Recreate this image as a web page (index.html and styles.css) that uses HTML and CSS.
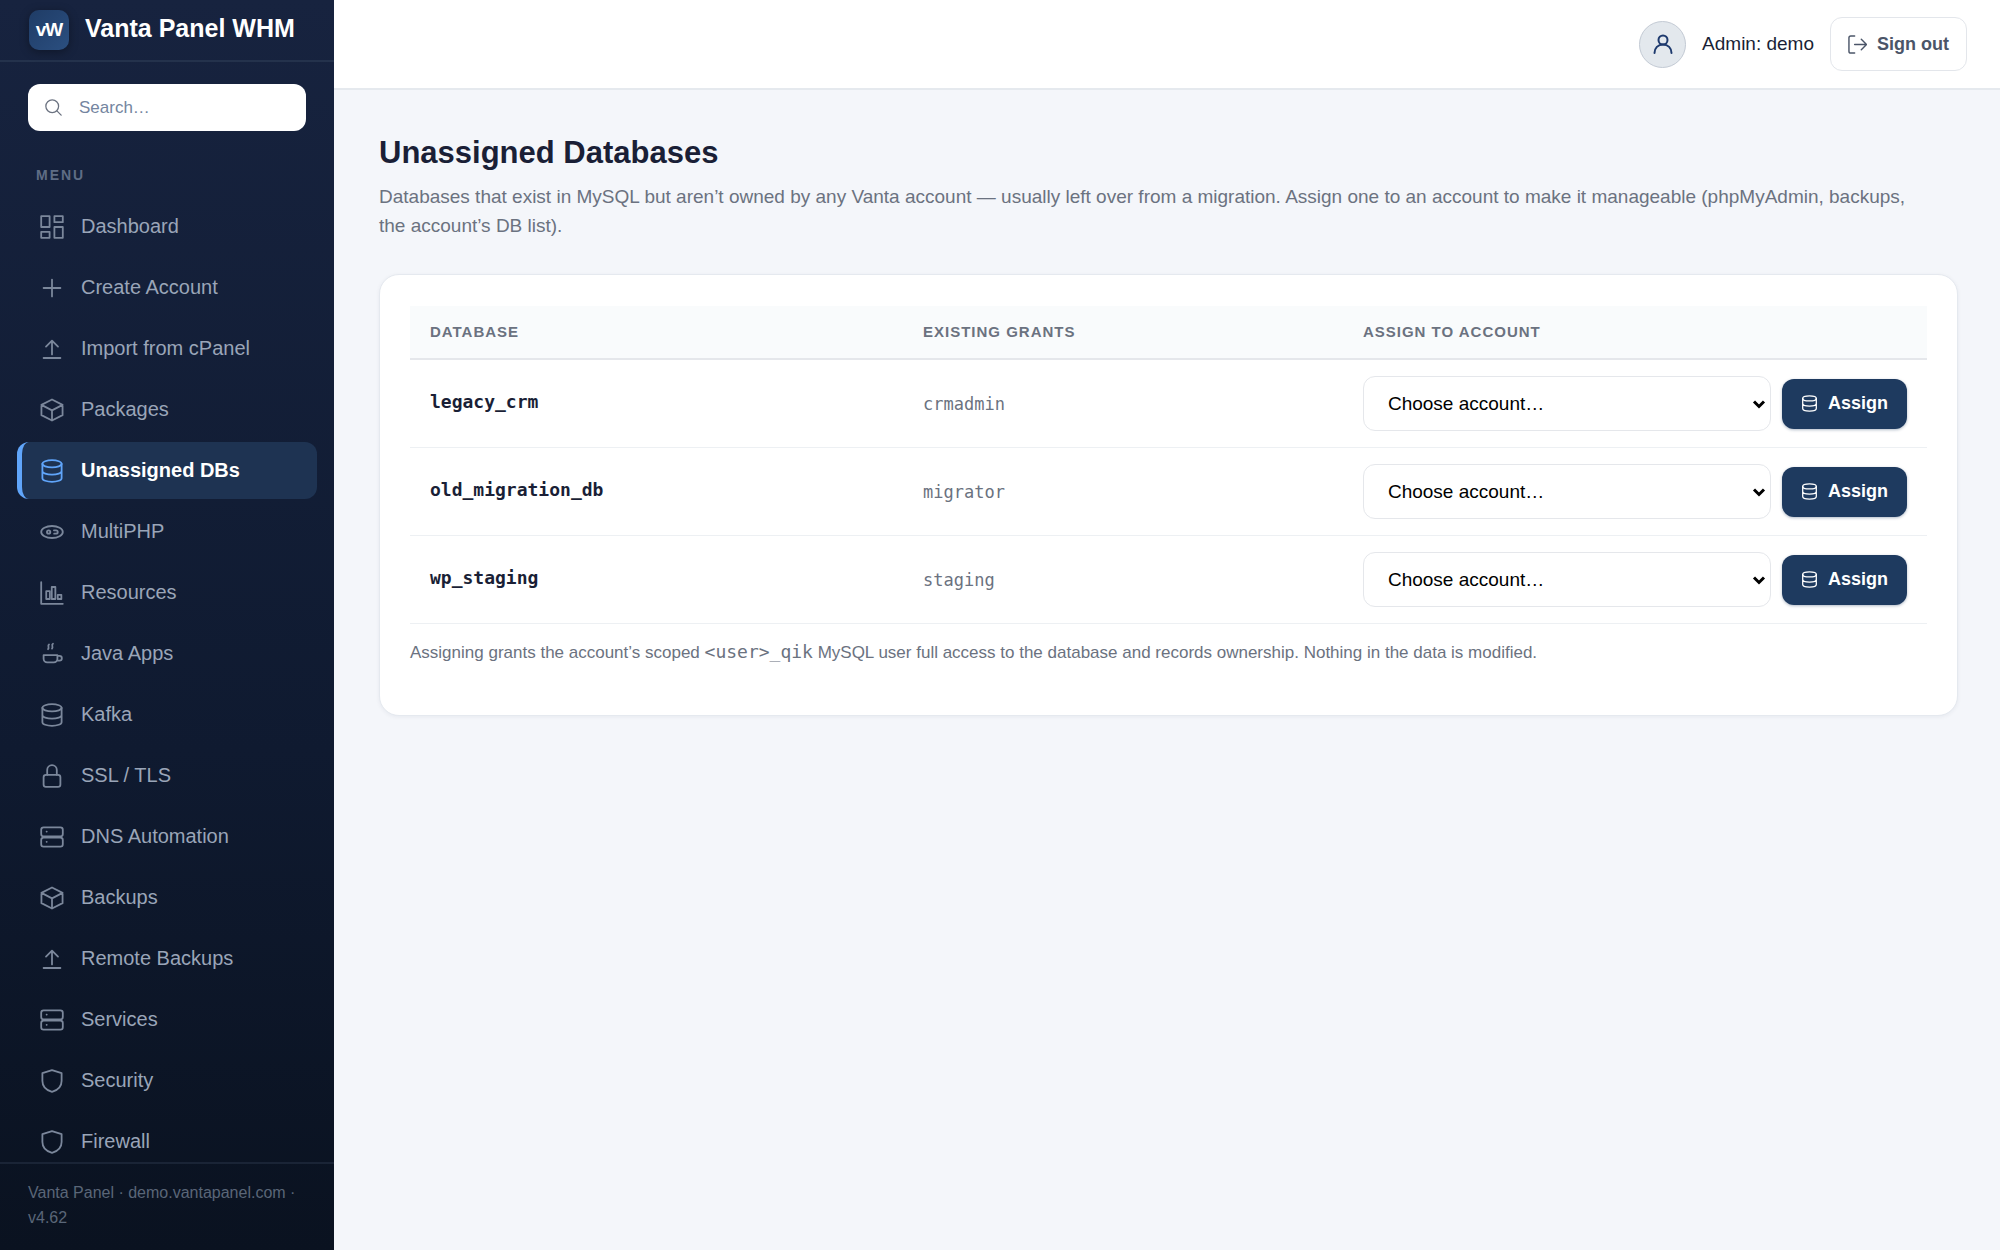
FILE: index.html
```html
<!DOCTYPE html>
<html lang="en">
<head>
    <meta charset="UTF-8">
    <meta name="viewport" content="width=device-width, initial-scale=1.0">
    <title>Unassigned Databases - Vanta Panel WHM</title>
    <link rel="stylesheet" href="styles.css">
</head>
<body>
    <!-- Shared icons -->
    <svg class="sprite" aria-hidden="true">
        <symbol id="i-dashboard" viewBox="2 2 20 20"><rect x="3" y="3" width="7" height="9"/><rect x="14" y="3" width="7" height="5"/><rect x="14" y="12" width="7" height="9"/><rect x="3" y="16" width="7" height="5"/></symbol>
        <symbol id="i-plus" viewBox="2 2 20 20"><path d="M12 5v14M5 12h14"/></symbol>
        <symbol id="i-upload" viewBox="2 2 20 20"><path d="M12 16.5V5M7 10l5-5 5 5M5 19.5h14"/></symbol>
        <symbol id="i-box" viewBox="2 2 20 20"><path d="M12 3.2l8.8 4.5v8.6L12 20.8l-8.8-4.5V7.700zM3.2 7.7l8.8 4.6 8.8-4.6M12 12.3v8.5"/></symbol>
        <symbol id="i-db" viewBox="2 2 20 20"><ellipse cx="12" cy="6" rx="8" ry="3"/><path d="M4 6v12c0 1.7 3.6 3 8 3s8-1.3 8-3V6M4 12c0 1.7 3.6 3 8 3s8-1.3 8-3"/></symbol>
        <symbol id="i-php" viewBox="2 2 20 20"><ellipse cx="12" cy="12" rx="9" ry="5"/><circle cx="9.2" cy="12" r="1.4"/><path d="M13.600 10.600h1.800a1.400 1.400 0 0 1 0 2.800h-1.600"/></symbol>
        <symbol id="i-chart" viewBox="2 2 20 20"><path d="M3 3v18h18"/><rect x="7.2" y="10.500" width="3" height="6.500"/><rect x="11.8" y="7" width="3" height="10"/><rect x="16.800" y="13.500" width="3" height="3.500"/></symbol>
        <symbol id="i-java" viewBox="2 2 20 20"><path d="M5 13h11.500v3a3 3 0 0 1-3 3H8a3 3 0 0 1-3-3zM16.500 13.500h1.700a2 2 0 0 1 0 4h-2M9.500 4c-1.600 1 .6 2.500-.8 4M12.800 3.500c-1.800 1 .6 2.500-.8 4"/></symbol>
        <symbol id="i-lock" viewBox="2 2 20 20"><rect x="5" y="11" width="14" height="10" rx="2"/><path d="M8 11V7a4 4 0 0 1 8 0v4"/></symbol>
        <symbol id="i-server" viewBox="2 2 20 20"><rect x="3" y="4" width="18" height="7.500" rx="2"/><rect x="3" y="12.500" width="18" height="7.500" rx="2"/><path d="M7.500 7.500h.1M7.500 16h.1"/></symbol>
        <symbol id="i-shield" viewBox="2 2 20 20"><path d="M12 3l8 2.500V12c0 5-3.500 7.800-8 9-4.500-1.200-8-4-8-9V5.500z"/></symbol>
        <symbol id="i-search" viewBox="2 2 20 20"><circle cx="10.500" cy="10.500" r="7.500"/><path d="M16 16l5 5"/></symbol>
        <symbol id="i-user" viewBox="2 2 20 20"><circle cx="12" cy="8" r="4.500"/><path d="M3.500 21c0-5 3.500-8.500 8.500-8.500s8.500 3.500 8.500 8.500"/></symbol>
        <symbol id="i-logout" viewBox="2 2 20 20"><path d="M9 3H5a2 2 0 0 0-2 2v14a2 2 0 0 0 2 2h4M9 12h12M16 6.500l5.500 5.500-5.500 5.500"/></symbol>
        <symbol id="i-chevron" viewBox="0 0 14 10"><path d="M2 2.500l5 5 5-5"/></symbol>
    </svg>

    <div class="layout">
        <aside class="sidebar">
            <div class="brand">
                <span class="brand-logo">vW</span>
                <span class="brand-name">Vanta Panel WHM</span>
            </div>

            <div class="search">
                <svg class="search-icon"><use href="#i-search"/></svg>
                <input type="search" placeholder="Search…" aria-label="Search">
            </div>

            <div class="menu-title">Menu</div>
            <nav class="menu">
                <a href="#"><svg><use href="#i-dashboard"/></svg>Dashboard</a>
                <a href="#"><svg><use href="#i-plus"/></svg>Create Account</a>
                <a href="#"><svg><use href="#i-upload"/></svg>Import from cPanel</a>
                <a href="#"><svg><use href="#i-box"/></svg>Packages</a>
                <a href="#" class="active"><svg><use href="#i-db"/></svg>Unassigned DBs</a>
                <a href="#"><svg><use href="#i-php"/></svg>MultiPHP</a>
                <a href="#"><svg><use href="#i-chart"/></svg>Resources</a>
                <a href="#"><svg><use href="#i-java"/></svg>Java Apps</a>
                <a href="#"><svg><use href="#i-db"/></svg>Kafka</a>
                <a href="#"><svg><use href="#i-lock"/></svg>SSL / TLS</a>
                <a href="#"><svg><use href="#i-server"/></svg>DNS Automation</a>
                <a href="#"><svg><use href="#i-box"/></svg>Backups</a>
                <a href="#"><svg><use href="#i-upload"/></svg>Remote Backups</a>
                <a href="#"><svg><use href="#i-server"/></svg>Services</a>
                <a href="#"><svg><use href="#i-shield"/></svg>Security</a>
                <a href="#"><svg><use href="#i-shield"/></svg>Firewall</a>
            </nav>

            <div class="sidebar-footer">Vanta Panel · demo.vantapanel.com · v4.62</div>
        </aside>

        <div class="page">
            <header class="topbar">
                <span class="avatar"><svg><use href="#i-user"/></svg></span>
                <span class="admin">Admin: demo</span>
                <button type="button" class="btn-signout"><svg><use href="#i-logout"/></svg>Sign out</button>
            </header>

            <main class="content">
                <h1>Unassigned Databases</h1>
                <p class="lead">Databases that exist in MySQL but aren’t owned by any Vanta account — usually left over from a migration. Assign one to an account to make it manageable (phpMyAdmin, backups, the account’s DB list).</p>

                <section class="card">
                    <table>
                        <thead>
                            <tr>
                                <th class="col-db">Database</th>
                                <th class="col-grants">Existing grants</th>
                                <th>Assign to account</th>
                            </tr>
                        </thead>
                        <tbody>
                            <tr>
                                <td class="db-name">legacy_crm</td>
                                <td class="grants">crmadmin</td>
                                <td>
                                    <form class="assign">
                                        <div class="select">
                                            <select aria-label="Account for legacy_crm"><option>Choose account…</option></select>
                                            <svg><use href="#i-chevron"/></svg>
                                        </div>
                                        <button type="button" class="btn-assign"><svg><use href="#i-db"/></svg>Assign</button>
                                    </form>
                                </td>
                            </tr>
                            <tr>
                                <td class="db-name">old_migration_db</td>
                                <td class="grants">migrator</td>
                                <td>
                                    <form class="assign">
                                        <div class="select">
                                            <select aria-label="Account for old_migration_db"><option>Choose account…</option></select>
                                            <svg><use href="#i-chevron"/></svg>
                                        </div>
                                        <button type="button" class="btn-assign"><svg><use href="#i-db"/></svg>Assign</button>
                                    </form>
                                </td>
                            </tr>
                            <tr>
                                <td class="db-name">wp_staging</td>
                                <td class="grants">staging</td>
                                <td>
                                    <form class="assign">
                                        <div class="select">
                                            <select aria-label="Account for wp_staging"><option>Choose account…</option></select>
                                            <svg><use href="#i-chevron"/></svg>
                                        </div>
                                        <button type="button" class="btn-assign"><svg><use href="#i-db"/></svg>Assign</button>
                                    </form>
                                </td>
                            </tr>
                        </tbody>
                    </table>
                    <p class="note">Assigning grants the account’s scoped <code>&lt;user&gt;_qik</code> MySQL user full access to the database and records ownership. Nothing in the data is modified.</p>
                </section>
            </main>
        </div>
    </div>
</body>
</html>
```
FILE: styles.css
```css
* {
    box-sizing: border-box;
}

body {
    margin: 0;
    font-family: "Liberation Sans", Arial, sans-serif;
    font-size: 19px;
    color: #1a1f36;
    background: #f4f6fa;
}

.sprite {
    display: none;
}

svg {
    flex: none;
    fill: none;
    stroke: currentColor;
    stroke-width: 1.5;
    stroke-linecap: round;
    stroke-linejoin: round;
}

.layout {
    display: flex;
    height: 100vh;
}

/* Sidebar */
.sidebar {
    display: flex;
    flex-direction: column;
    flex: none;
    width: 334px;
    background: linear-gradient(180deg, #17233f 0%, #0f1a30 60%, #0a1220 100%);
}

.brand {
    display: flex;
    align-items: flex-start;
    gap: 16px;
    padding: 10px 29px;
    border-bottom: 2px solid #24324c;
}

.brand-logo {
    display: flex;
    align-items: center;
    justify-content: center;
    width: 40px;
    height: 40px;
    border-radius: 10px;
    background: linear-gradient(135deg, #1f3c66, #2b4f80);
    box-shadow: 0 2px 10px rgba(0, 0, 0, 0.35);
    color: #fff;
    font-size: 19px;
    font-weight: bold;
    letter-spacing: -1px;
}

.brand-name {
    color: #fff;
    font-size: 25px;
    line-height: 36px;
    font-weight: bold;
}

.search {
    display: flex;
    align-items: center;
    gap: 17px;
    height: 47px;
    margin: 22px 28px 0;
    padding: 0 17px;
    border-radius: 12px;
    background: #fff;
}

.search-icon {
    width: 17px;
    height: 17px;
    color: #6b7280;
}

.search input {
    width: 100%;
    padding: 0;
    border: 0;
    outline: 0;
    background: none;
    font: inherit;
    font-size: 17px;
}

.search input::placeholder {
    color: #7485a0;
}

.menu-title {
    margin: 34px 36px 13px;
    color: #5f6d85;
    font-size: 14px;
    line-height: 20px;
    font-weight: bold;
    letter-spacing: 2px;
    text-transform: uppercase;
}

.menu {
    display: flex;
    flex-direction: column;
    flex: 1;
    gap: 4px;
    min-height: 0;
    padding: 0 17px;
    overflow: hidden;
}

.menu a {
    display: flex;
    flex: none;
    align-items: center;
    gap: 17px;
    padding: 14px 18px;
    border-left: 5px solid transparent;
    border-radius: 12px;
    color: #9aa5b8;
    font-size: 20px;
    line-height: 29px;
    text-decoration: none;
}

.menu svg {
    width: 24px;
    height: 24px;
    color: #7b879b;
}

.menu a.active {
    border-left-color: #60a5fa;
    background: #1e3352;
    color: #fff;
    font-weight: bold;
}

.menu a.active svg {
    color: #60a5fa;
}

.sidebar-footer {
    padding: 16px 28px 20px;
    border-top: 2px solid #1a2436;
    color: #5a6678;
    font-size: 16px;
    line-height: 25px;
}

/* Top bar */
.page {
    flex: 1;
    min-width: 0;
    overflow: auto;
}

.topbar {
    display: flex;
    align-items: center;
    justify-content: flex-end;
    gap: 16px;
    height: 90px;
    padding: 0 33px;
    border-bottom: 2px solid #e5e9ee;
    background: #fff;
}

.avatar {
    display: flex;
    align-items: center;
    justify-content: center;
    width: 47px;
    height: 47px;
    border: 1px solid #c3cad4;
    border-radius: 50%;
    background: #e3e8ed;
    color: #1e3a6e;
}

.avatar svg {
    width: 20px;
    height: 20px;
    stroke-width: 2;
}

.btn-signout {
    display: flex;
    align-items: center;
    gap: 10px;
    height: 54px;
    padding: 0 17px;
    border: 1px solid #e3e6eb;
    border-radius: 12px;
    background: #fff;
    color: #4b5568;
    font: inherit;
    font-size: 18px;
    font-weight: bold;
}

.btn-signout svg {
    width: 19px;
    height: 19px;
}

/* Content */
.content {
    padding: 44px 42px 44px 45px;
}

h1 {
    margin: 0 0 10px;
    font-size: 31px;
    line-height: 38px;
}

.lead {
    max-width: 1550px;
    margin: 0 0 34px;
    color: #6b7280;
    line-height: 29px;
}

.card {
    padding: 31px 30px 48px;
    border: 1px solid #e5e9ef;
    border-radius: 20px;
    background: #fff;
    box-shadow: 0 1px 4px rgba(20, 30, 60, 0.06);
}

table {
    width: 100%;
    border-collapse: collapse;
    table-layout: fixed;
}

th {
    padding: 16px 20px;
    border-bottom: 2px solid #e5e7eb;
    background: #f9fbfc;
    color: #6b7280;
    font-size: 15px;
    line-height: 20px;
    letter-spacing: 1px;
    text-align: left;
    text-transform: uppercase;
}

.col-db {
    width: 32.5%;
}

.col-grants {
    width: 29%;
}

td {
    padding: 16px 20px;
    border-bottom: 1px solid #edf0f3;
}

.db-name {
    padding-bottom: 20px;
    font-family: "DejaVu Sans Mono", monospace;
    font-size: 18px;
    font-weight: bold;
}

.grants {
    color: #6b7280;
    font-family: "DejaVu Sans Mono", monospace;
    font-size: 17px;
}

.assign {
    display: flex;
    align-items: center;
    gap: 11px;
    margin: 0;
}

.select {
    position: relative;
    flex: 1;
    min-width: 0;
}

.select select {
    display: block;
    width: 100%;
    height: 55px;
    padding: 0 24px;
    border: 1px solid #e5e7eb;
    border-radius: 12px;
    background: #fff;
    color: #000;
    font: inherit;
    appearance: none;
}

/* Arrow lies over the select */
.select svg {
    position: absolute;
    top: 23px;
    right: 5px;
    width: 14px;
    height: 10px;
    stroke-width: 3;
    stroke-linecap: butt;
    stroke-linejoin: miter;
    color: #000;
    pointer-events: none;
}

.btn-assign {
    display: flex;
    align-items: center;
    gap: 10px;
    height: 50px;
    padding: 0 19px;
    border: 0;
    border-radius: 12px;
    background: #1e3a5f;
    box-shadow: 0 1px 3px rgba(30, 58, 95, 0.35);
    color: #fff;
    font: inherit;
    font-size: 18px;
    font-weight: bold;
}

.btn-assign svg {
    width: 17px;
    height: 17px;
}

.note {
    margin: 14px 0 0;
    color: #6b7280;
    font-size: 17px;
    line-height: 28px;
}

.note code {
    font-family: "DejaVu Sans Mono", monospace;
    font-size: 18px;
}
```
